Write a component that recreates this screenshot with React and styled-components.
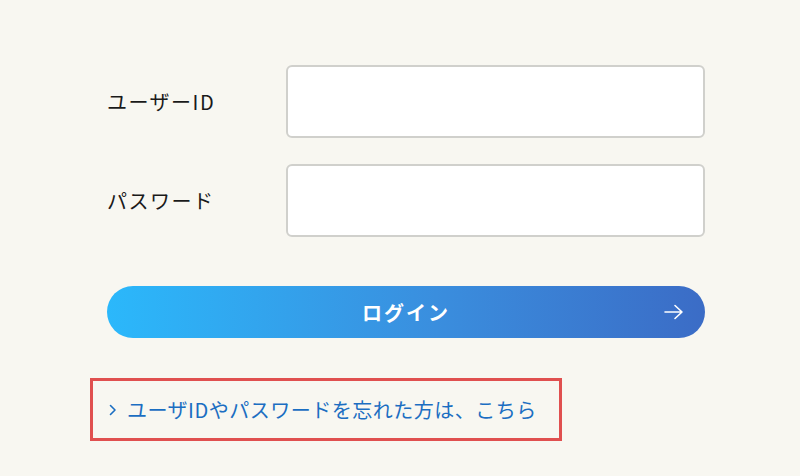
import React from "react";
import styled, { createGlobalStyle } from "styled-components";

const GlobalStyle = createGlobalStyle`
  html, body {
    margin: 0;
    padding: 0;
    background: #f8f7f1;
  }
  body {
    font-family: "Noto Sans CJK JP", "Noto Sans", sans-serif;
    color: #1a1a1a;
  }
`;

const Page = styled.div`
  width: 800px;
  height: 476px;
  box-sizing: border-box;
  padding: 65px 0 0 90px;
  background: #f8f7f1;
`;

const Form = styled.form`
  width: 598px;
  margin-left: 17px;
  display: flex;
  flex-direction: column;
  gap: 26px;
`;

const Row = styled.div`
  display: flex;
  align-items: center;
`;

const Label = styled.label`
  width: 179px;
  font-size: 20px;
  letter-spacing: 1.5px;
  color: #1a1a1a;
`;

const Input = styled.input`
  width: 419px;
  height: 73px;
  box-sizing: border-box;
  border: 2px solid #d0d0cc;
  border-radius: 6px;
  background: #fff;
  outline: none;
`;

const LoginButton = styled.button`
  position: relative;
  margin-top: 23px;
  width: 598px;
  height: 52px;
  border: none;
  border-radius: 26px;
  background: linear-gradient(90deg, #2bb8fb 0%, #3a8ede 55%, #3b6cc6 100%);
  color: #fff;
  font-family: inherit;
  font-size: 20px;
  font-weight: 700;
  letter-spacing: 2px;
  display: flex;
  align-items: center;
  justify-content: center;
  cursor: pointer;
`;

const Arrow = styled.svg`
  position: absolute;
  right: 21px;
  top: 50%;
  transform: translateY(-50%);
`;

const Notice = styled.div`
  margin-top: 40px;
  width: 472px;
  height: 63px;
  box-sizing: border-box;
  border: 3px solid #e0504f;
  display: flex;
  align-items: center;
  padding-left: 16px;
`;

const Link = styled.a`
  color: #1b6ec2;
  font-size: 20px;
  letter-spacing: 0.5px;
  text-decoration: none;
  display: flex;
  align-items: center;
  gap: 10px;
`;

const Chevron = styled.svg`
  flex: none;
`;

const App = () => {
  return (
    <>
      <GlobalStyle />
      <Page>
        <Form onSubmit={(e) => e.preventDefault()}>
          <Row>
            <Label htmlFor="uid">ユーザーID</Label>
            <Input id="uid" type="text" />
          </Row>
          <Row>
            <Label htmlFor="pw">パスワード</Label>
            <Input id="pw" type="password" />
          </Row>
          <LoginButton type="submit">
            ログイン
            <Arrow width="20" height="16" viewBox="0 0 20 16" fill="none">
              <path
                d="M1 8h17M11 1.5L18 8l-7 6.5"
                stroke="#fff"
                strokeWidth="1.6"
                strokeLinecap="round"
                strokeLinejoin="round"
              />
            </Arrow>
          </LoginButton>
        </Form>
        <Notice>
          <Link href="#">
            <Chevron width="8" height="12" viewBox="0 0 8 12" fill="none">
              <path
                d="M1.5 1.5L6 6l-4.5 4.5"
                stroke="#1b6ec2"
                strokeWidth="1.6"
                strokeLinecap="round"
                strokeLinejoin="round"
              />
            </Chevron>
            ユーザIDやパスワードを忘れた方は、こちら
          </Link>
        </Notice>
      </Page>
    </>
  );
};

export default App;
